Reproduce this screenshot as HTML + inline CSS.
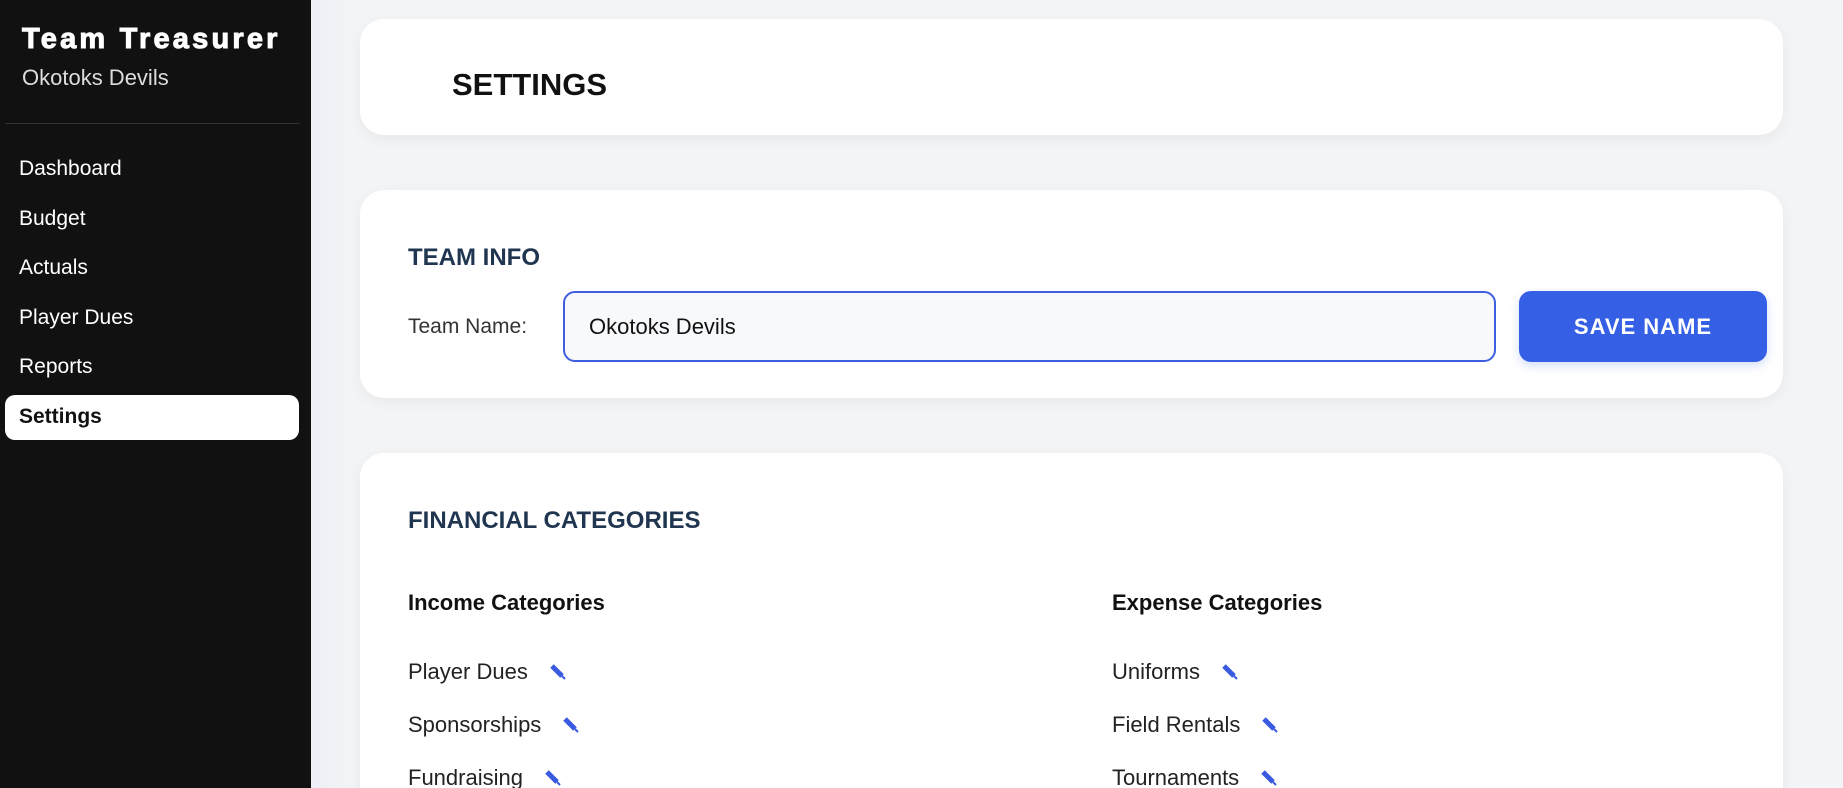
<!DOCTYPE html>
<html><head><meta charset="utf-8"><style>
*{box-sizing:border-box;margin:0;padding:0}
html{width:1843px;height:788px;overflow:hidden}
body{width:1843px;height:788px;overflow:hidden;font-family:"Liberation Sans",sans-serif;background:#f3f4f6;position:relative}
.side{position:absolute;left:0;top:0;width:311px;height:788px;background:#111}
.brand{position:absolute;left:22px;top:23px;color:#fff;font-weight:900;font-size:29px;letter-spacing:3.2px;-webkit-text-stroke:1px #fff}
.team{position:absolute;left:22px;top:65px;color:#ddd;font-size:22px}
.div{position:absolute;left:5px;width:295px;top:123px;height:1px;background:#333}
.nav{position:absolute;left:19px;color:#fff;font-size:21px}
.active{position:absolute;left:5px;top:395px;width:294px;height:45px;background:#fff;border-radius:10px}
.main{position:absolute;left:311px;top:0;width:1532px;height:788px;overflow:hidden;background:linear-gradient(90deg,#eceff6,#f3f4f6 40px)}
.card{position:absolute;left:49px;width:1423px;background:#fff;border-radius:24px;box-shadow:0 4px 14px rgba(0,0,0,.05)}
.h{font-family:"Liberation Sans",sans-serif;font-weight:bold;position:absolute}
.item{position:absolute;font-size:22px;color:#222;display:flex;align-items:center;gap:20px}
.item svg{width:20px;height:20px}
</style></head><body>
<div class="side">
<div class="brand">Team Treasurer</div>
<div class="team">Okotoks Devils</div>
<div class="div"></div>
<div class="nav" style="top:157px">Dashboard</div>
<div class="nav" style="top:207px">Budget</div>
<div class="nav" style="top:256px">Actuals</div>
<div class="nav" style="top:306px">Player Dues</div>
<div class="nav" style="top:355px">Reports</div>
<div class="active"></div>
<div class="nav" style="top:405px;color:#111;font-weight:bold">Settings</div>
</div>
<div class="main">
<div class="card" style="top:19px;height:116px">
<div class="h" style="left:92px;top:48px;font-size:31px;color:#111">SETTINGS</div>
</div>
<div class="card" style="top:190px;height:208px">
<div class="h" style="left:48px;top:54px;font-size:24px;color:#1f3550">TEAM INFO</div>
<div style="position:absolute;left:48px;top:125px;font-size:21px;color:#333">Team Name:</div>
<div style="position:absolute;left:203px;top:101px;width:933px;height:71px;border:2px solid #3d5fe0;border-radius:12px;background:#f8f9fb;font-size:22px;color:#111;padding:21px 24px">Okotoks Devils</div>
<div style="position:absolute;left:1159px;top:101px;width:248px;height:71px;background:#3560e6;border-radius:12px;color:#fff;font-weight:bold;font-size:22px;letter-spacing:1px;text-align:center;line-height:71px;box-shadow:0 4px 10px rgba(53,96,230,.2)">SAVE NAME</div>
</div>
<div class="card" style="top:453px;height:360px">
<div class="h" style="left:48px;top:54px;font-size:24px;color:#1f3550">FINANCIAL CATEGORIES</div>
<div class="h" style="left:48px;top:137px;font-size:22px;color:#111">Income Categories</div>
<div class="h" style="left:752px;top:137px;font-size:22px;color:#111">Expense Categories</div>
<div class="item" style="left:48px;top:206px">Player Dues<svg viewBox="0 0 20 20"><path d="M4 4l10 10" stroke="#3a5ae0" stroke-width="5"/><path d="M14 14l3 3" stroke="#3a5ae0" stroke-width="2"/></svg></div>
<div class="item" style="left:48px;top:259px">Sponsorships<svg viewBox="0 0 20 20"><path d="M4 4l10 10" stroke="#3a5ae0" stroke-width="5"/><path d="M14 14l3 3" stroke="#3a5ae0" stroke-width="2"/></svg></div>
<div class="item" style="left:48px;top:312px">Fundraising<svg viewBox="0 0 20 20"><path d="M4 4l10 10" stroke="#3a5ae0" stroke-width="5"/><path d="M14 14l3 3" stroke="#3a5ae0" stroke-width="2"/></svg></div>
<div class="item" style="left:752px;top:206px">Uniforms<svg viewBox="0 0 20 20"><path d="M4 4l10 10" stroke="#3a5ae0" stroke-width="5"/><path d="M14 14l3 3" stroke="#3a5ae0" stroke-width="2"/></svg></div>
<div class="item" style="left:752px;top:259px">Field Rentals<svg viewBox="0 0 20 20"><path d="M4 4l10 10" stroke="#3a5ae0" stroke-width="5"/><path d="M14 14l3 3" stroke="#3a5ae0" stroke-width="2"/></svg></div>
<div class="item" style="left:752px;top:312px">Tournaments<svg viewBox="0 0 20 20"><path d="M4 4l10 10" stroke="#3a5ae0" stroke-width="5"/><path d="M14 14l3 3" stroke="#3a5ae0" stroke-width="2"/></svg></div>
</div>
</div>
</body></html>
